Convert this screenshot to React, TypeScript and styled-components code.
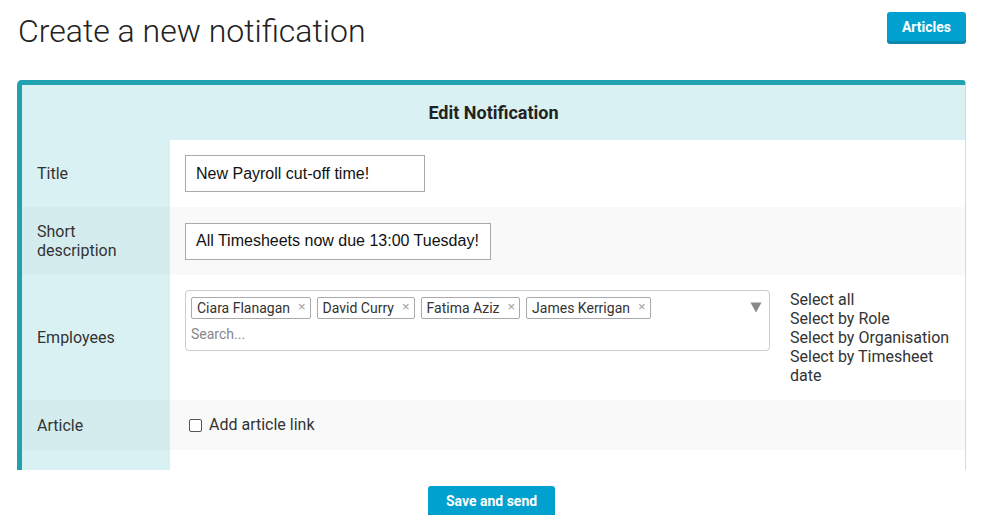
import React from "react";
import styled, { createGlobalStyle } from "styled-components";

const Global = createGlobalStyle`
  html, body { margin: 0; padding: 0; background: #fff; }
  body { font-family: Roboto, "Liberation Sans", Arial, sans-serif; color: #333; }
  * { box-sizing: border-box; }
`;

const Page = styled.div`
  padding: 0 15px 0 17px;
`;

const TopBar = styled.div`
  display: flex;
  justify-content: space-between;
  align-items: flex-start;
  height: 80px;
`;

const Heading = styled.h1`
  margin: 9px 0 0 1px;
  font-family: Roboto, sans-serif;
  font-weight: 300;
  font-size: 32px;
  line-height: 44px;
  color: #222;
`;

const Button = styled.button`
  font-family: Roboto, sans-serif;
  font-weight: 700;
  font-size: 14px;
  color: #fff;
  background: #00a1cf;
  border: none;
  border-radius: 3px;
  box-shadow: 0 3px 0 #0d87ab;
  padding: 0 15px;
  height: 29px;
  cursor: pointer;
`;

const TopButton = styled(Button)`
  margin-top: 12px;
`;

const CardClip = styled.div`
  height: 390px;
  overflow: hidden;
  border-top: 5px solid #20a2b0;
  border-left: 5px solid #20a2b0;
  border-right: 1px solid #d8d8d8;
  border-top-left-radius: 5px;
  border-top-right-radius: 4px;
`;

const CardHeader = styled.div`
  height: 55px;
  background: #daf1f3;
  display: flex;
  align-items: center;
  justify-content: center;
  font-weight: 700;
  font-size: 18px;
  color: #222;
`;

const Row = styled.div`
  display: grid;
  grid-template-columns: 148px 1fr;
`;

const Label = styled.div<{ $striped?: boolean }>`
  background: ${(p) => (p.$striped ? "#d4ecee" : "#daf1f3")};
  padding: 15px;
  display: flex;
  align-items: center;
  font-size: 16px;
  line-height: 19px;
  color: #333;
`;

const Cell = styled.div<{ $striped?: boolean }>`
  background: ${(p) => (p.$striped ? "#f9f9f9" : "#fff")};
  padding: 15px;
  display: flex;
  align-items: center;
  gap: 20px;
`;

const TextInput = styled.div<{ $w: number }>`
  width: ${(p) => p.$w}px;
  height: 37px;
  border: 1px solid #a9a9a9;
  background: #fff;
  padding: 0 10px;
  display: flex;
  align-items: center;
  font-family: Arial, "Liberation Sans", sans-serif;
  font-size: 16px;
  color: #111;
  white-space: nowrap;
`;

const Select = styled.div`
  flex: 1;
  align-self: flex-start;
  position: relative;
  border: 1px solid #ccc;
  border-radius: 4px;
  padding: 6px 30px 7px 5px;
  background: #fff;
`;

const Tags = styled.div`
  display: flex;
  flex-wrap: wrap;
  gap: 6px;
`;

const Tag = styled.span`
  display: inline-flex;
  align-items: center;
  height: 22px;
  border: 1px solid #aaa;
  border-radius: 2px;
  padding: 0 4px 0 5px;
  font-size: 14px;
  color: #333;
  background: #fff;
`;

const TagX = styled.span`
  margin-left: 8px;
  margin-top: -4px;
  font-size: 13px;
  color: #999;
  font-family: Arial, "Liberation Sans", sans-serif;
`;

const Search = styled.div`
  margin-top: 6px;
  font-size: 14px;
  line-height: 18px;
  color: #888;
`;

const Caret = styled.svg`
  position: absolute;
  right: 7px;
  top: 10px;
`;

const Links = styled.div`
  flex: 0 0 160px;
  align-self: flex-start;
  font-size: 16px;
  line-height: 19px;
  color: #333;
`;

const Check = styled.label`
  display: flex;
  align-items: center;
  gap: 7px;
  font-size: 16px;
  line-height: 20px;
  color: #333;
  margin-left: 4px;
`;

const Box = styled.span`
  width: 13px;
  height: 13px;
  border: 1px solid #555;
  border-radius: 2px;
  background: #fff;
  margin-top: 1px;
`;

const Footer = styled.div`
  display: flex;
  justify-content: center;
  padding-top: 16px;
`;

const SaveButton = styled(Button)`
  height: 29px;
  padding: 0 18px;
`;

export default function App() {
  const tags = ["Ciara Flanagan", "David Curry", "Fatima Aziz", "James Kerrigan"];
  return (
    <Page>
      <Global />
      <TopBar>
        <Heading>Create a new notification</Heading>
        <TopButton>Articles</TopButton>
      </TopBar>
      <CardClip>
        <CardHeader>Edit Notification</CardHeader>
        <Row>
          <Label>Title</Label>
          <Cell>
            <TextInput $w={240}>New Payroll cut-off time!</TextInput>
          </Cell>
        </Row>
        <Row>
          <Label $striped>Short description</Label>
          <Cell $striped>
            <TextInput $w={306}>All Timesheets now due 13:00 Tuesday!</TextInput>
          </Cell>
        </Row>
        <Row>
          <Label>Employees</Label>
          <Cell>
            <Select>
              <Tags>
                {tags.map((t) => (
                  <Tag key={t}>
                    {t}
                    <TagX>×</TagX>
                  </Tag>
                ))}
              </Tags>
              <Search>Search...</Search>
              <Caret width="12" height="12" viewBox="0 0 12 12">
                <path d="M0.5 1.5 L11.5 1.5 L6 11.5 Z" fill="#888" />
              </Caret>
            </Select>
            <Links>
              <div>Select all</div>
              <div>Select by Role</div>
              <div>Select by Organisation</div>
              <div>Select by Timesheet date</div>
            </Links>
          </Cell>
        </Row>
        <Row>
          <Label $striped>Article</Label>
          <Cell $striped>
            <Check>
              <Box />
              Add article link
            </Check>
          </Cell>
        </Row>
        <Row>
          <Label>&nbsp;</Label>
          <Cell>&nbsp;</Cell>
        </Row>
      </CardClip>
      <Footer>
        <SaveButton>Save and send</SaveButton>
      </Footer>
    </Page>
  );
}
